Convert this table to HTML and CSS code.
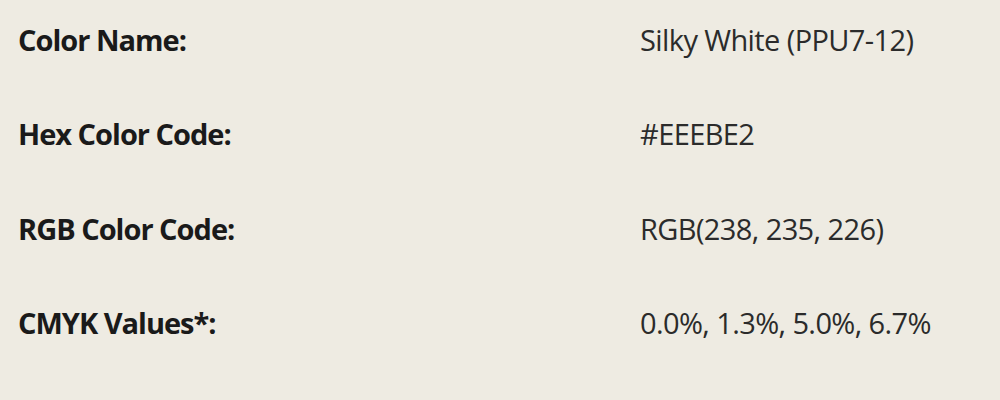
FILE: index.html
```html
<!DOCTYPE html>
<html>
<head lang="en">
    <meta charset="UTF-8">
    <title>Silky White</title>
    <link rel="stylesheet" href="styles.css">
</head>
<body>
    <div class="info">
        <div class="row">
            <div class="label">Color Name:</div>
            <div class="value">Silky White (PPU7-12)</div>
        </div>
        <div class="row">
            <div class="label">Hex Color Code:</div>
            <div class="value">#EEEBE2</div>
        </div>
        <div class="row">
            <div class="label">RGB Color Code:</div>
            <div class="value">RGB(238, 235, 226)</div>
        </div>
        <div class="row">
            <div class="label">CMYK Values*:</div>
            <div class="value">0.0%, 1.3%, 5.0%, 6.7%</div>
        </div>
    </div>
</body>
</html>
```

FILE: styles.css
```css
* {
    margin: 0;
    padding: 0;
}
body {
    background: #eeebe2;
    font-family: "Open Sans", "Noto Sans", sans-serif;
    color: #1a1a1a;
}
.info {
    padding: 20px 0 0 18px;
}
.row {
    display: grid;
    grid-template-columns: 622px auto;
    height: 94.3px;
    font-size: 29px;
    line-height: 40px;
}
.label {
    font-weight: 700;
    letter-spacing: -1px;
}
.value {
    color: #2b2b2b;
    letter-spacing: -0.6px;
}
```
